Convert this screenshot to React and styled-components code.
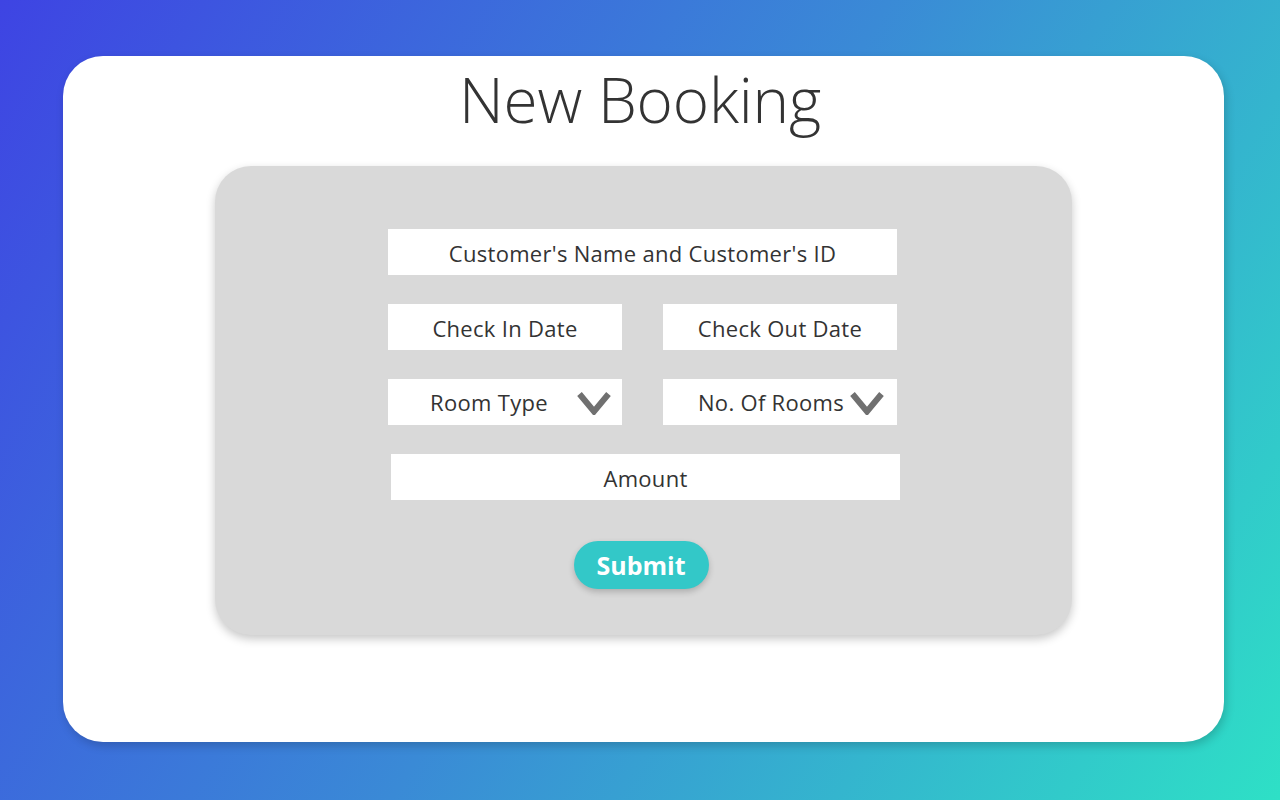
import React from "react";
import styled, { createGlobalStyle } from "styled-components";

const Global = createGlobalStyle`
  html, body { margin: 0; padding: 0; height: 100%; }
  body {
    font-family: "Open Sans", "Noto Sans", sans-serif;
    background: linear-gradient(122deg, #3e44e3 0%, #3a8ad6 50%, #2ee0c6 100%);
    min-height: 800px;
  }
  * { box-sizing: border-box; }
`;

const Page = styled.div`
  width: 1280px;
  height: 800px;
  padding: 56px 56px 58px 63px;
  display: flex;
`;

const Card = styled.div`
  flex: 1;
  background: #fff;
  border-radius: 40px;
  box-shadow: 2px 4px 10px rgba(0, 0, 0, 0.18);
  display: flex;
  flex-direction: column;
  align-items: center;
  padding-top: 8px;
`;

const Title = styled.h1`
  margin: 0 0 32px -7px;
  font-weight: 300;
  font-size: 62px;
  line-height: 70px;
  color: #333;
  letter-spacing: -0.2px;
`;

const Panel = styled.form`
  width: 857px;
  height: 469px;
  background: #d9d9d9;
  border-radius: 36px;
  box-shadow: 0 4px 10px rgba(0, 0, 0, 0.22);
  display: flex;
  flex-direction: column;
  align-items: center;
  padding-top: 63px;
  gap: 29px;
`;

const Row = styled.div`
  display: flex;
  gap: 41px;
  margin-left: ${(p) => p.$offset || 0}px;
`;

const Field = styled.input`
  width: ${(p) => p.$w}px;
  height: 46px;
  border: none;
  outline: none;
  background: #fff;
  text-align: center;
  padding: 1px 0 0;
  font-family: "Open Sans", "Noto Sans", sans-serif;
  font-size: 22px;
  letter-spacing: 0.3px;
  color: #333;
  &::placeholder { color: #333; opacity: 1; }
`;

const SelectBox = styled.div`
  position: relative;
  width: 234px;
  height: 46px;
  background: #fff;
  display: flex;
  align-items: center;
  justify-content: center;
  padding: 0 ${(p) => p.$pr}px 0 0;
  font-size: 22px;
  letter-spacing: 0.3px;
  color: #333;
`;

const Chevron = styled.svg`
  position: absolute;
  right: ${(p) => p.$right}px;
  top: 12px;
  width: 34px;
  height: 24px;
`;

const Submit = styled.button`
  margin-top: 12px;
  width: 135px;
  height: 48px;
  border: none;
  border-radius: 24px;
  background: #33c8c8;
  color: #fff;
  font-family: "Open Sans", "Noto Sans", sans-serif;
  font-weight: 700;
  font-size: 25px;
  box-shadow: 0 3px 6px rgba(0, 0, 0, 0.2);
  cursor: pointer;
  margin-left: -5px;
`;

const Select = ({ label, pr, right }) => (
  <SelectBox $pr={pr}>
    {label}
    <Chevron $right={right} viewBox="0 0 34 24">
      <polyline points="2.5,3 17,20.5 31.5,3" fill="none" stroke="#707070" strokeWidth="6" />
    </Chevron>
  </SelectBox>
);

export default function App() {
  return (
    <>
      <Global />
      <Page>
        <Card>
          <Title>New Booking</Title>
          <Panel onSubmit={(e) => e.preventDefault()}>
            <Row $offset={-2}>
              <Field $w={509} placeholder="Customer's Name and Customer's ID" />
            </Row>
            <Row $offset={-2}>
              <Field $w={234} placeholder="Check In Date" />
              <Field $w={234} placeholder="Check Out Date" />
            </Row>
            <Row $offset={-2}>
              <Select label="Room Type" pr={32} right={11} />
              <Select label="No. Of Rooms" pr={18} right={13} />
            </Row>
            <Row $offset={4}>
              <Field $w={509} placeholder="Amount" />
            </Row>
            <Submit type="submit">Submit</Submit>
          </Panel>
        </Card>
      </Page>
    </>
  );
}
